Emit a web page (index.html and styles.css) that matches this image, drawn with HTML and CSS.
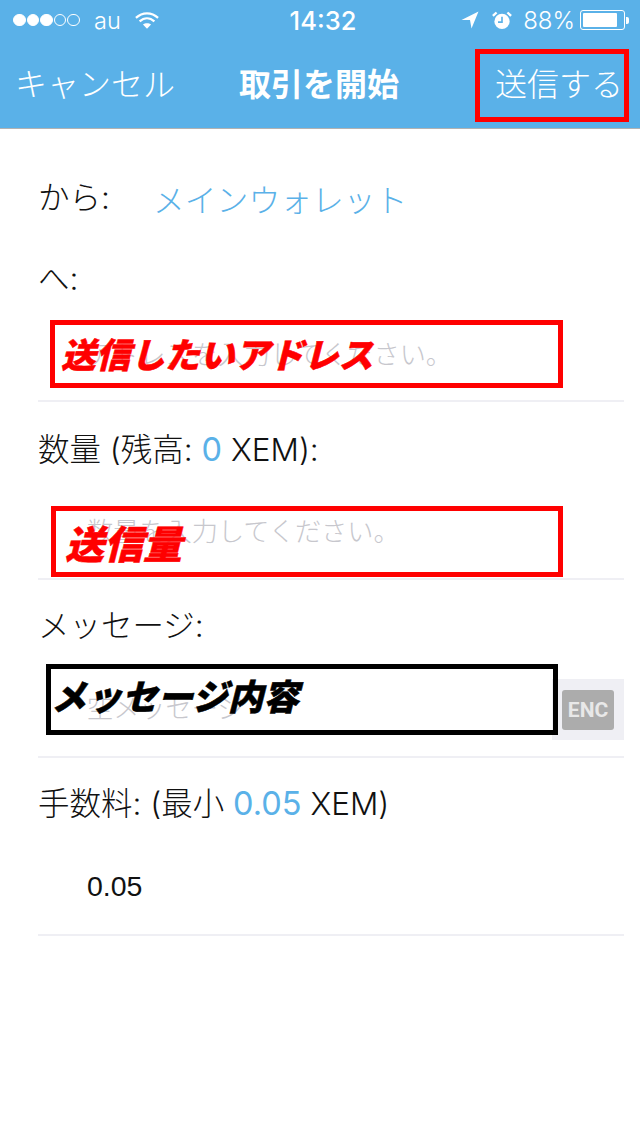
FILE: index.html
```html
<!DOCTYPE html>
<html lang="ja">
<head>
<meta charset="utf-8">
<title>取引を開始</title>
<link rel="stylesheet" href="styles.css">
</head>
<body>
<header class="top">
  <div class="status">
    <div class="status-left">
      <span class="signal"><i class="dot on"></i><i class="dot on"></i><i class="dot on"></i><i class="dot"></i><i class="dot"></i></span>
      <span class="carrier">au</span>
      <svg class="wifi" width="24" height="19" viewBox="0 0 26 20"><path d="M1 7.2 C8 0.6 18 0.6 25 7.2" fill="none" stroke="#fff" stroke-width="2.4"/><path d="M5 11 C10 6.4 16 6.4 21 11" fill="none" stroke="#fff" stroke-width="2.4"/><path d="M13 19 L8.6 14.4 C11 12.4 15 12.4 17.4 14.4 Z" fill="#fff"/></svg>
    </div>
    <div class="clock">14:32</div>
    <div class="status-right">
      <svg class="loc" width="18" height="18" viewBox="0 0 18 18"><path d="M17.5 0.5 L0.5 9 L9 9 L10.5 17.5 Z" fill="#fff"/></svg>
      <svg class="alarm" width="20" height="19" viewBox="0 0 22 20"><circle cx="11" cy="11" r="8.4" fill="#fff"/><path d="M11 6 V11.8 H6.6" fill="none" stroke="#5ab1e8" stroke-width="1.8"/><path d="M1 5 L5 1.2 M21 5 L17 1.2" stroke="#fff" stroke-width="2.6"/></svg>
      <span class="pct">88%</span>
      <span class="battery"><span class="level"></span></span><span class="nub"></span>
    </div>
  </div>
  <nav class="nav">
    <span class="nav-btn">キャンセル</span>
    <span class="nav-title">取引を開始</span>
    <span class="nav-btn send">送信する<i class="mark-send"></i></span>
  </nav>
</header>
<main class="form">
  <div class="from"><span class="from-label">から:</span><span class="from-value">メインウォレット</span></div>
  <section class="field first">
    <div class="label">へ:</div>
    <div class="input h-address"><span class="ph">アドレスを入力してください。</span>
      <div class="mark mark-address">送信したいアドレス</div>
    </div>
  </section>
  <section class="field">
    <div class="label">数量 (残高: <b class="blue">0</b> XEM):</div>
    <div class="input h-amount"><span class="ph">数量を入力してください。</span>
      <div class="mark mark-amount">送信量</div>
    </div>
  </section>
  <section class="field tight">
    <div class="label">メッセージ:</div>
    <div class="input h-msg"><span class="ph">空メッセージ</span>
      <div class="enc-wrap"><span class="enc">ENC</span></div>
      <div class="mark mark-msg">メッセージ内容</div>
    </div>
  </section>
  <section class="field tight">
    <div class="label">手数料: (最小 <b class="blue">0.05</b> XEM)</div>
    <div class="input h-fee"><span class="val">0.05</span></div>
  </section>
</main>
</body>
</html>
```
FILE: styles.css
```css
* { box-sizing: border-box; }
html, body { margin: 0; padding: 0; }
body {
  width: 640px;
  height: 1136px;
  background: #fff;
  overflow: hidden;
  font-family: "Inter", "Noto Sans CJK JP", sans-serif;
  color: #111;
}
.top {
  height: 129px;
  background: #5ab1e8;
  border-bottom: 1px solid #b2b2b2;
  color: #fff;
}
.status {
  height: 40px;
  display: grid;
  grid-template-columns: 1fr auto 1fr;
  align-items: center;
  padding: 0 11px 0 13px;
}
.status-left { display: flex; align-items: center; }
.signal { display: flex; gap: 1px; }
.dot { width: 12.5px; height: 12.5px; border-radius: 50%; border: 1px solid #fff; display: block; }
.dot.on { background: #fff; }
.carrier { font-size: 23.5px; margin-left: 14.5px; font-weight: 300; }
.wifi { margin-left: 14px; }
.clock { font-size: 25.5px; font-weight: 500; margin-left: 4px; }
.status-right { display: flex; align-items: center; justify-content: flex-end; }
.alarm { margin-left: 13px; }
.pct { font-size: 24px; margin-left: 11px; font-weight: 300; }
.battery { width: 45px; height: 20px; margin-left: 5px; border: 1px solid #fff; border-radius: 3px; padding: 2px; display: block; }
.level { display: block; height: 100%; width: 88%; background: #fff; border-radius: 1px; }
.nub { width: 3px; height: 7px; background: #fff; border-radius: 0 2px 2px 0; margin-left: 1px; }
.nav {
  height: 88px;
  display: grid;
  grid-template-columns: 1fr auto 1fr;
  align-items: center;
  padding: 0 17px 4px 15px;
  font-family: "Noto Sans CJK JP", sans-serif;
  font-size: 32px;
  line-height: 44px;
}
.nav-btn { font-weight: 300; }
.nav-title { font-weight: 700; }
.send { position: relative; justify-self: end; }
.mark-send {
  position: absolute;
  left: -20px;
  top: -11px;
  width: 154px;
  height: 73px;
  border: 5px solid #f00;
}
.form {
  padding: 0 16px 0 38px;
  font-size: 31.5px;
  font-weight: 300;
}
.from {
  padding-top: 49px;
  height: 89px;
  display: flex;
  line-height: 40px;
}
.from-label { width: 115px; }
.from-value { color: #5ab1e8; font-size: 31.8px; font-family: "Noto Sans CJK JP", sans-serif; font-weight: 300; }
.field { border-bottom: 2px solid #efeff4; padding-top: 28px; }
.field.first { padding-top: 41px; }
.field.tight { padding-top: 26px; }
.label { height: 40px; line-height: 40px; white-space: nowrap; }
.blue { color: #5ab1e8; font-weight: 400; font-size: 32.5px; }
.input {
  position: relative;
  display: flex;
  align-items: center;
  padding: 0 0 3px 49px;
  font-size: 26.2px;
}
.h-address { height: 91px; margin-top: 10px; }
.h-amount { height: 94px; margin-top: 14px; }
.h-msg { height: 96px; margin-top: 14px; }
.h-fee { height: 96px; margin-top: 14px; padding-bottom: 0; }
.ph { color: #c7c7cd; font-family: "Noto Sans CJK JP", sans-serif; font-weight: 300; }
.val { color: #111; font: 400 28.5px "Liberation Sans", sans-serif; }
.enc-wrap {
  position: absolute;
  right: 0;
  top: 19px;
  width: 72px;
  height: 61px;
  background: #efeff4;
  display: flex;
  align-items: center;
  padding-left: 10px;
}
.enc {
  width: 52px;
  height: 40px;
  border-radius: 3px;
  background: #acacac;
  color: #e8e8e8;
  font: 700 21px/40px "Roboto", sans-serif;
  text-align: center;
}
.mark {
  position: absolute;
  display: flex;
  align-items: center;
  border: 5px solid #f00;
  color: #f00;
  font-family: "Noto Sans CJK JP", sans-serif;
  font-weight: 900;
  font-style: italic;
  white-space: nowrap;
  -webkit-text-stroke: 0.5px currentColor;
}
.mark-address { left: 12px; top: 11px; width: 513px; height: 68px; padding: 0 0 3px 6px; font-size: 34.7px; }
.mark-amount { left: 13px; top: 22px; width: 512px; height: 71px; padding-left: 9px; font-size: 39px; }
.mark-msg { left: 8px; top: 4px; width: 512px; height: 71px; padding: 0 0 10px 0; border-color: #000; color: #000; font-size: 35.5px; }
```
